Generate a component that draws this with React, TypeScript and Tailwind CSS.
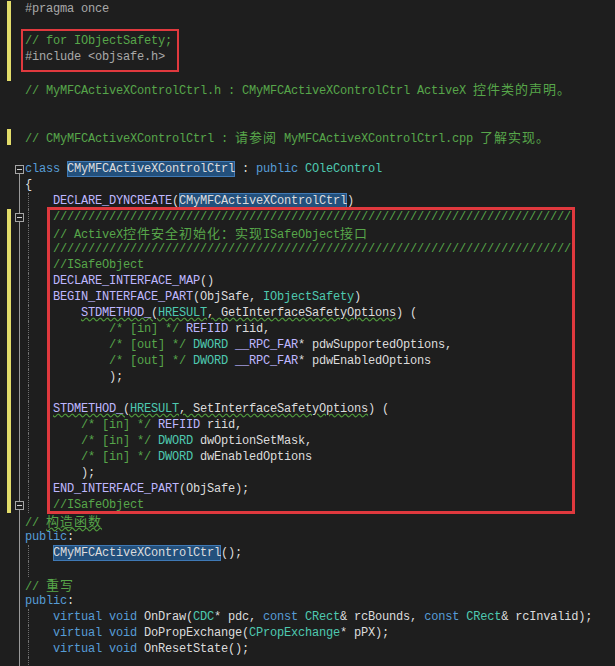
import React from 'react';

type Kind = 't' | 'c' | 'p' | 'k' | 'y' | 'm' | 's';
type Tok = [string, Kind] | [string, Kind, 'w'];

// token colours, VS dark theme
const colors: Record<Kind, string> = {
    t: 'text-[#dcdcdc]',
    c: 'text-[#57a64a]',
    p: 'text-[#a9a9a9]',
    k: 'text-[#569cd6]',
    y: 'text-[#4ec9b0]',
    m: 'text-[#beb7ff]',
    s: 'inline-block h-4 align-top bg-[#23507c] text-[#dcdcdc] shadow-[inset_0_0_0_1px_#3f79b5]',
};

const slashes = '/'.repeat(74);

const lines: Tok[][] = [
    [['#pragma once', 'p']],
    [],
    [['// for IObjectSafety;', 'c']],
    [['#include <objsafe.h>', 'p']],
    [],
    [['// MyMFCActiveXControlCtrl.h : CMyMFCActiveXControlCtrl ActiveX 控件类的声明。', 'c']],
    [],
    [],
    [['// CMyMFCActiveXControlCtrl : 请参阅 MyMFCActiveXControlCtrl.cpp 了解实现。', 'c']],
    [],
    [['class ', 'k'], ['CMyMFCActiveXControlCtrl', 's'], [' : ', 't'], ['public ', 'k'], ['COleControl', 'y']],
    [['{', 't']],
    [['    ', 't'], ['DECLARE_DYNCREATE', 'm'], ['(', 't'], ['CMyMFCActiveXControlCtrl', 's'], [')', 't']],
    [['    ' + slashes, 'c']],
    [['    // ActiveX控件安全初始化：实现ISafeObject接口', 'c']],
    [['    ' + slashes, 'c']],
    [['    //ISafeObject', 'c']],
    [['    ', 't'], ['DECLARE_INTERFACE_MAP', 'm'], ['()', 't']],
    [['    ', 't'], ['BEGIN_INTERFACE_PART', 'm'], ['(ObjSafe, ', 't'], ['IObjectSafety', 'y'], [')', 't']],
    [['        ', 't'], ['STDMETHOD_', 'm', 'w'], ['(', 't', 'w'], ['HRESULT', 'y', 'w'], [', GetInterfaceSafetyOptions', 't', 'w'], [') (', 't']],
    [['            ', 't'], ['/* [in] */ ', 'c'], ['REFIID', 'm'], [' riid,', 't']],
    [['            ', 't'], ['/* [out] */ ', 'c'], ['DWORD', 'y'], [' ', 't'], ['__RPC_FAR', 'm'], ['* pdwSupportedOptions,', 't']],
    [['            ', 't'], ['/* [out] */ ', 'c'], ['DWORD', 'y'], [' ', 't'], ['__RPC_FAR', 'm'], ['* pdwEnabledOptions', 't']],
    [['            );', 't']],
    [],
    [['    ', 't'], ['STDMETHOD_', 'm', 'w'], ['(', 't', 'w'], ['HRESULT', 'y', 'w'], [', SetInterfaceSafetyOptions', 't', 'w'], [') (', 't']],
    [['        ', 't'], ['/* [in] */ ', 'c'], ['REFIID', 'm'], [' riid,', 't']],
    [['        ', 't'], ['/* [in] */ ', 'c'], ['DWORD', 'y'], [' dwOptionSetMask,', 't']],
    [['        ', 't'], ['/* [in] */ ', 'c'], ['DWORD', 'y'], [' dwEnabledOptions', 't']],
    [['        );', 't']],
    [['    ', 't'], ['END_INTERFACE_PART', 'm'], ['(ObjSafe);', 't']],
    [['    //ISafeObject', 'c']],
    [['// ', 'c'], ['构造函数', 'c', 'w']],
    [['public', 'k'], [':', 't']],
    [['    ', 't'], ['CMyMFCActiveXControlCtrl', 's'], ['();', 't']],
    [],
    [['// 重写', 'c']],
    [['public', 'k'], [':', 't']],
    [['    ', 't'], ['virtual void ', 'k'], ['OnDraw(', 't'], ['CDC', 'y'], ['* pdc, ', 't'], ['const ', 'k'], ['CRect', 'y'], ['& rcBounds, ', 't'], ['const ', 'k'], ['CRect', 'y'], ['& rcInvalid);', 't']],
    [['    ', 't'], ['virtual void ', 'k'], ['DoPropExchange(', 't'], ['CPropExchange', 'y'], ['* pPX);', 't']],
    [['    ', 't'], ['virtual void ', 'k'], ['OnResetState();', 't']],
    [],
];

const changed = new Set([0, 1, 2, 3, 4, 8, ...Array.from({ length: 19 }, (_, i) => 13 + i)]);
const folds = new Set([10, 13, 31]);
const noGuide = new Set([32, 33, 36, 37]);

// CJK runs get their own font so they take two columns
const renderText = (s: string) =>
    s.split(/([\u3000-\u303f\u4e00-\u9fff\uff00-\uffef]+)/).map((part, i) =>
        i % 2 ? (
            <span key={i} className="font-['Noto_Sans_CJK_SC',sans-serif] text-[13px] tracking-[1px]">
                {part}
            </span>
        ) : (
            part
        )
    );

const FoldBox: React.FC = () => (
    <div className="w-[9px] h-[9px] shrink-0 border border-[#a5a5a5] flex items-center justify-center">
        <div className="w-[5px] h-px bg-[#d0d0d0]" />
    </div>
);

// outline column: fold boxes joined by a thin line
const Outline: React.FC<{ idx: number }> = ({ idx }) => {
    if (idx === 10)
        return (
            <div className="w-[9px] flex flex-col items-center pt-[4px]">
                <FoldBox />
                <div className="w-px flex-1 bg-[#9a9a9a]" />
            </div>
        );
    if (folds.has(idx))
        return (
            <div className="w-[9px] flex flex-col items-center">
                <div className="w-px h-[4px] bg-[#9a9a9a]" />
                <FoldBox />
                <div className="w-px flex-1 bg-[#9a9a9a]" />
            </div>
        );
    return (
        <div className="w-[9px] flex justify-center">
            {idx > 10 && <div className="w-px h-full bg-[#9a9a9a]" />}
        </div>
    );
};

const CodeLine: React.FC<{ toks: Tok[]; idx: number }> = ({ toks, idx }) => (
    <div className="flex h-4 leading-4">
        <div className="flex w-[25px] h-4 shrink-0 pl-[7px] gap-[4px]">
            <div className={`w-[4px] h-4 ${changed.has(idx) ? 'bg-[#e2dc6a]' : ''}`} />
            <Outline idx={idx} />
        </div>
        <div className="relative whitespace-pre">
            {idx > 11 && !noGuide.has(idx) && (
                <div className="absolute left-[3px] top-0 h-4 border-l border-dotted border-[#707070]" />
            )}
            {toks.map(([text, kind, wavy], i) => (
                <span
                    key={i}
                    className={`${colors[kind]} ${wavy ? 'underline decoration-wavy decoration-[#4f9a3c] underline-offset-[1px]' : ''}`}
                >
                    {renderText(text)}
                </span>
            ))}
        </div>
    </div>
);

const App: React.FC = () => {
    return (
        <div className="relative w-[615px] h-[666px] overflow-hidden bg-[#1e1e1e] pt-px font-['Liberation_Mono',monospace] text-[12px] tracking-[-0.2px] text-[#dcdcdc]">
            {lines.map((toks, i) => (
                <CodeLine key={i} toks={toks} idx={i} />
            ))}

            {/* red annotation boxes drawn over the code */}
            <div className="absolute left-[21px] top-[29px] w-[158px] h-[43px] border-2 border-[#e0393e]" />
            <div className="absolute left-[47px] top-[207px] w-[528px] h-[307px] border-[3px] border-[#e0393e]" />
        </div>
    );
};

export default App;
